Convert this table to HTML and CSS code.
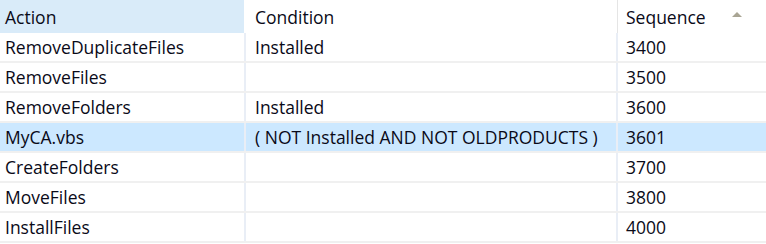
FILE: index.html
```html
<!DOCTYPE html>
<html>
<head>
<meta charset="utf-8">
<link rel="stylesheet" href="styles.css">
</head>
<body>
<div class="grid">
  <div class="row head">
    <div class="cell c1 hover">Action</div>
    <div class="cell c2">Condition</div>
    <div class="cell c3">Sequence<span class="sort"></span></div>
  </div>
  <div class="row">
    <div class="cell c1">RemoveDuplicateFiles</div>
    <div class="cell c2">Installed</div>
    <div class="cell c3">3400</div>
  </div>
  <div class="row">
    <div class="cell c1">RemoveFiles</div>
    <div class="cell c2"></div>
    <div class="cell c3">3500</div>
  </div>
  <div class="row">
    <div class="cell c1">RemoveFolders</div>
    <div class="cell c2">Installed</div>
    <div class="cell c3">3600</div>
  </div>
  <div class="row selected">
    <div class="cell c1">MyCA.vbs</div>
    <div class="cell c2">( NOT Installed AND NOT OLDPRODUCTS )</div>
    <div class="cell c3">3601</div>
  </div>
  <div class="row">
    <div class="cell c1">CreateFolders</div>
    <div class="cell c2"></div>
    <div class="cell c3">3700</div>
  </div>
  <div class="row">
    <div class="cell c1">MoveFiles</div>
    <div class="cell c2"></div>
    <div class="cell c3">3800</div>
  </div>
  <div class="row">
    <div class="cell c1">InstallFiles</div>
    <div class="cell c2"></div>
    <div class="cell c3">4000</div>
  </div>
</div>
</body>
</html>
```
FILE: styles.css
```css
html, body {
  margin: 0;
  padding: 0;
  background: #ffffff;
}
body {
  font-family: "Open Sans", "Noto Sans", sans-serif;
  font-size: 17.5px;
  color: #0a0a18;
  overflow: hidden;
}
.grid {
  display: flex;
  flex-direction: column;
  width: 766px;
}
.row {
  display: grid;
  grid-template-columns: 246px 372px 1fr;
  height: 30px;
  border-bottom: 2px solid #f0f0f0;
  box-sizing: border-box;
}
.row.head {
  height: 33px;
  border-bottom: none;
}
.row.selected {
  background: #cce8ff;
}
.cell {
  display: flex;
  align-items: center;
  white-space: nowrap;
  overflow: hidden;
  box-sizing: border-box;
  border-right: 2px solid #e9eef6;
}
.head .cell {
  border-right: 1px solid #e5e5e5;
}
.head .cell.hover {
  background: #d9ebf9;
  border-right: 2px solid #ffffff;
}
.c1 { padding-left: 5px; }
.c2 { padding-left: 9px; }
.c3 { padding-left: 8px; border-right: none; position: relative; }
.head .c3 { border-right: none; }
.sort {
  position: absolute;
  left: 114px;
  top: 12px;
  width: 0;
  height: 0;
  border-left: 5px solid transparent;
  border-right: 5px solid transparent;
  border-bottom: 5px solid #a9a594;
}
```
